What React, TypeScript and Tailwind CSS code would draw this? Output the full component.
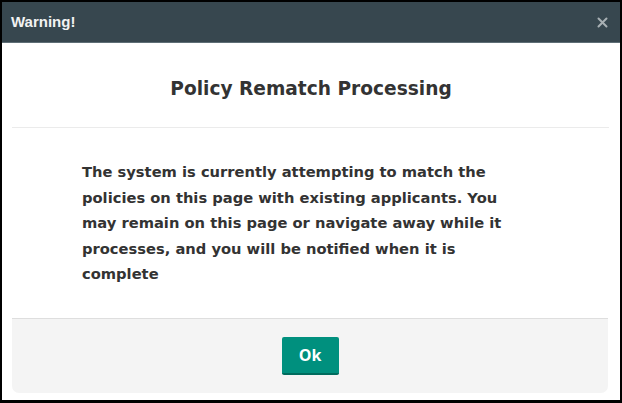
import React from 'react'

export default function App() {
  return (
    <div className="w-[622px] h-[403px] border-l-2 border-t-2 border-r-2 border-b-[3px] border-black bg-white flex flex-col overflow-hidden">
      <div className="h-[41px] shrink-0 bg-[#37474f] border-b border-[#5e6e76] flex items-center justify-between pl-[9px] pr-[12px]">
        <span className="text-[15px] font-bold text-[#f2f2f2] font-['Liberation_Sans',Arial,sans-serif]">
          Warning!
        </span>
        <svg width="11" height="11" viewBox="0 0 11 11" className="mt-[1px]">
          <path d="M1.5 1.5 L9.5 9.5 M9.5 1.5 L1.5 9.5" stroke="#a8b0b4" strokeWidth="2" strokeLinecap="round" />
        </svg>
      </div>

      <div className="h-[84px] shrink-0 flex items-center justify-center pt-[8px]">
        <h1 className="text-[18.6px] font-bold text-[#333] font-['DejaVu_Sans',Verdana,sans-serif]">
          Policy Rematch Processing
        </h1>
      </div>
      <div className="ml-[10px] mr-[11px] border-t border-[#ebebeb]" />

      <div className="flex-1 pl-[80px] pt-[31px]">
        <p className="text-[14.7px] leading-[25.5px] font-bold text-[#333] font-['DejaVu_Sans',Verdana,sans-serif] w-[452px]">
          The system is currently attempting to match the policies on this page with existing applicants. You may remain on this page or navigate away while it processes, and you will be notified when it is complete
        </p>
      </div>

      <div className="ml-[10px] mr-[12px] mb-[7px] h-[75px] shrink-0 border-t border-[#dedede] bg-[#f4f4f4] rounded-b-[7px] flex items-center justify-center">
        <button className="w-[57px] h-[38px] mt-[-1px] bg-[#00907e] border-b-2 border-[#006b5d] rounded-[2px] text-white text-[16px] font-bold font-['Open_Sans',sans-serif]">
          Ok
        </button>
      </div>
    </div>
  )
}
